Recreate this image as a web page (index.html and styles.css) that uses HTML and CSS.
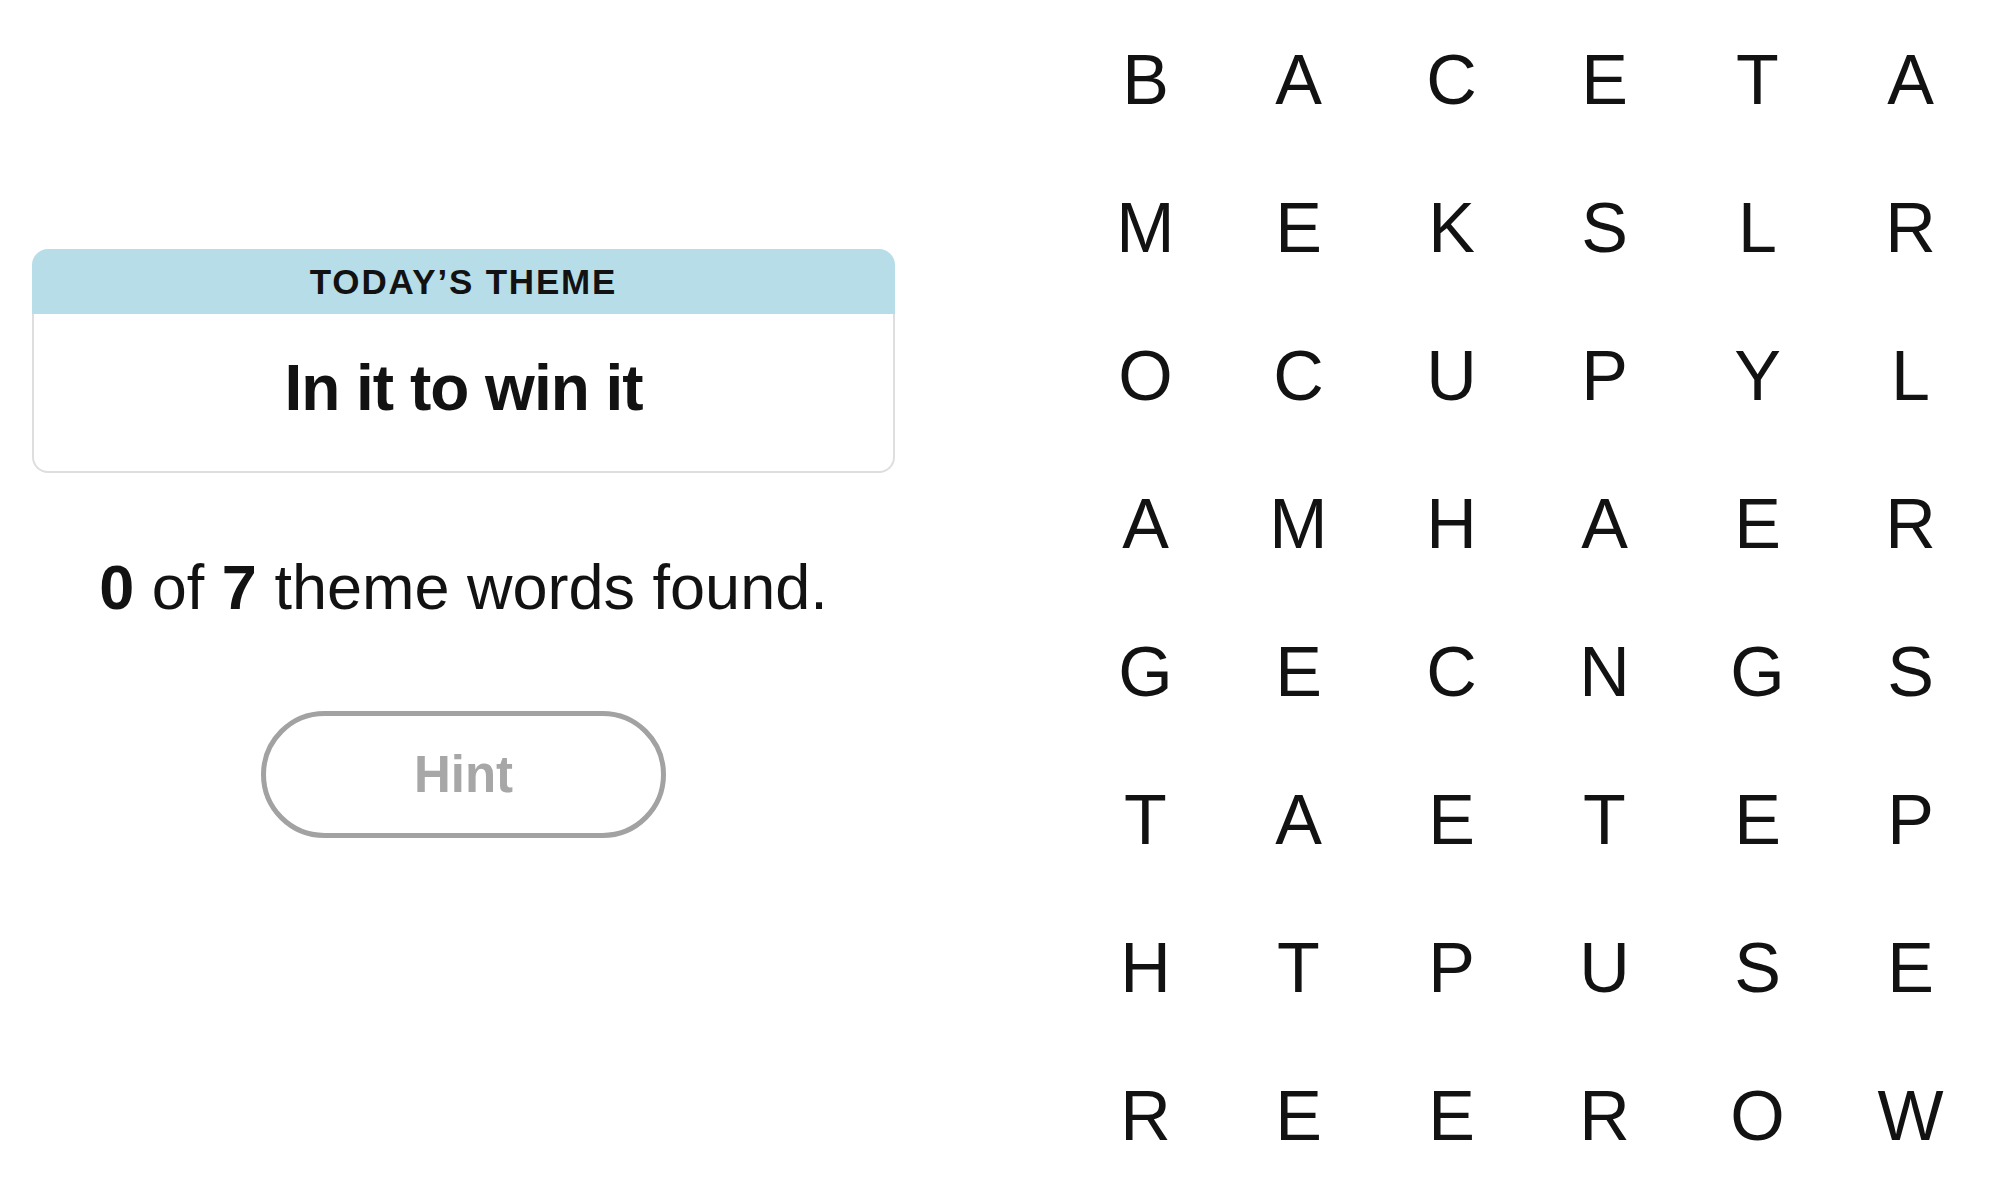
FILE: index.html
```html
<!DOCTYPE html>
<html lang="en">
<head>
<meta charset="utf-8">
<title>Strands</title>
<link rel="stylesheet" href="styles.css">
</head>
<body>
<main class="page">
  <section class="left">
    <div class="card">
      <div class="card-head">TODAY’S THEME</div>
      <div class="card-body"><h1 class="theme">In it to win it</h1></div>
    </div>
    <p class="counter"><b>0</b> of <b>7</b> theme words found.</p>
    <button class="hint">Hint</button>
  </section>
  <section class="board">
    <span>B</span><span>A</span><span>C</span><span>E</span><span>T</span><span>A</span>
    <span>M</span><span>E</span><span>K</span><span>S</span><span>L</span><span>R</span>
    <span>O</span><span>C</span><span>U</span><span>P</span><span>Y</span><span>L</span>
    <span>A</span><span>M</span><span>H</span><span>A</span><span>E</span><span>R</span>
    <span>G</span><span>E</span><span>C</span><span>N</span><span>G</span><span>S</span>
    <span>T</span><span>A</span><span>E</span><span>T</span><span>E</span><span>P</span>
    <span>H</span><span>T</span><span>P</span><span>U</span><span>S</span><span>E</span>
    <span>R</span><span>E</span><span>E</span><span>R</span><span>O</span><span>W</span>
  </section>
</main>
</body>
</html>
```
FILE: styles.css
```css
html, body {
  margin: 0;
  padding: 0;
  background: #ffffff;
}
body {
  width: 2000px;
  height: 1196px;
  overflow: hidden;
  font-family: "Liberation Sans", Arial, sans-serif;
  color: #121212;
}
.page {
  display: flex;
  padding: 0 0 0 32px;
}
.left {
  width: 863px;
  padding-top: 249px;
  display: flex;
  flex-direction: column;
  align-items: center;
}
.card {
  width: 100%;
}
.card-head {
  height: 65px;
  line-height: 65px;
  background: #b7dde9;
  border-radius: 16px 16px 0 0;
  text-align: center;
  font-size: 35px;
  font-weight: 700;
  letter-spacing: 1.8px;
  color: #121212;
}
.card-body {
  height: 147px;
  padding-bottom: 10px;
  border: 2px solid #dedede;
  border-top: none;
  border-radius: 0 0 16px 16px;
  display: flex;
  align-items: center;
  justify-content: center;
}
.theme {
  margin: 0;
  font-size: 64px;
  line-height: 1;
  font-weight: 700;
  letter-spacing: -1px;
}
.counter {
  margin: 78px 0 0;
  font-size: 63px;
  line-height: 72px;
  text-align: center;
}
.counter b {
  font-weight: 700;
}
.hint {
  margin-top: 88px;
  width: 405px;
  height: 127px;
  border: 5px solid #a2a2a2;
  border-radius: 64px;
  background: #ffffff;
  font-family: "Liberation Sans", Arial, sans-serif;
  font-size: 51px;
  font-weight: 700;
  color: #a7a7a7;
  padding: 0;
}
.board {
  margin-left: 174px;
  padding-top: 6px;
  display: grid;
  grid-template-columns: repeat(6, 153px);
  grid-template-rows: repeat(8, 148px);
}
.board span {
  display: flex;
  align-items: center;
  justify-content: center;
  font-size: 70px;
  line-height: 1;
  color: #121212;
}
```
